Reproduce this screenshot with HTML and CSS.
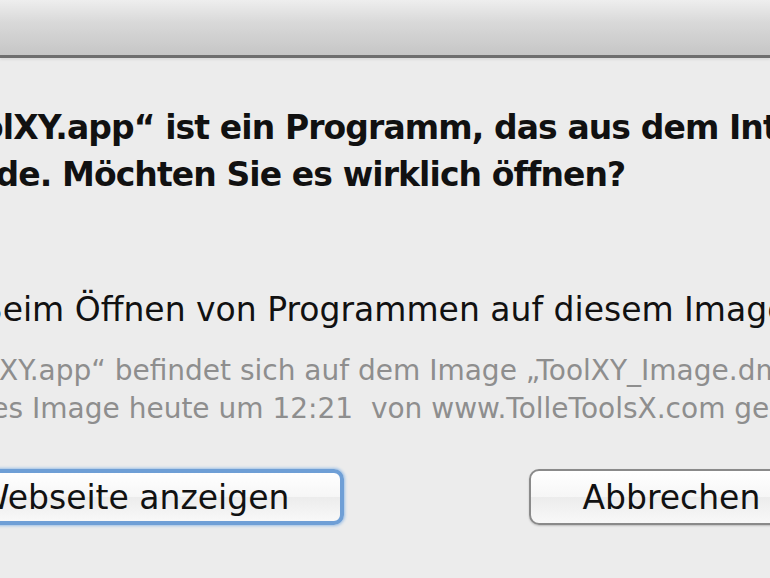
FILE: index.html
```html
<!DOCTYPE html>
<html lang="de">
<head>
    <meta charset="UTF-8">
    <meta name="viewport" content="width=device-width, initial-scale=1.0">
    <title>Programm öffnen</title>
    <link rel="stylesheet" href="styles.css">
</head>
<body>
    <div class="titlebar"></div>

    <div class="dialog">
        <div class="content">
            <p class="message">„ToolXY.app“ ist ein Programm, das aus dem Internet geladen<br>
            wurde. Möchten Sie es wirklich öffnen?</p>

            <label class="option">
                <span class="checkbox"></span>
                <span class="option-text">Beim Öffnen von Programmen auf diesem Image nicht mehr nachfragen</span>
            </label>

            <p class="info">„ToolXY.app“ befindet sich auf dem Image „ToolXY_Image.dmg“. Safari hat<br>
            dieses Image heute um 12:21&nbsp; von www.TolleToolsX.com geladen.</p>
        </div>

        <div class="buttons">
            <button class="btn btn-default">Webseite anzeigen</button>
            <button class="btn">Abbrechen</button>
        </div>
    </div>
</body>
</html>
```

FILE: styles.css
```css
html, body {
    margin: 0;
    height: 100%;
    overflow: hidden;
}
body {
    background: #ececec;
    font-family: "DejaVu Sans", "Noto Sans", sans-serif;
    color: #111;
}
.titlebar {
    height: 55px;
    background: linear-gradient(#eeeeee, #d9d9d9 40%, #c6c6c6);
    border-bottom: 3px solid #6e6e6e;
    box-shadow: 0 2px 2px #dcdcdc;
}
.dialog {
    margin-left: -72px;
    white-space: nowrap;
}
.content {
    padding-top: 46px;
}
.message {
    margin: 0;
    font-size: 33px;
    font-weight: bold;
    line-height: 47px;
    letter-spacing: -0.9px;
}
.option {
    display: flex;
    align-items: center;
    gap: 18px;
    margin-top: 92px;
    font-size: 33px;
    line-height: 40px;
}
.checkbox {
    width: 30px;
    height: 30px;
    border: 2px solid #888;
    border-radius: 4px;
    background: #fff;
    flex: none;
}
.info {
    margin: 22px 0 0 6px;
    font-size: 28px;
    line-height: 38px;
    color: #8e8e8e;
}
.buttons {
    display: flex;
    gap: 185px;
    margin-top: 41px;
    margin-left: -6px;
}
.btn {
    height: 56px;
    padding: 0 51px;
    font-family: inherit;
    font-size: 33px;
    color: #111;
    border: 2px solid #8a8a8a;
    border-radius: 10px;
    background: linear-gradient(#ffffff, #f6f6f6 50%, #ececec 51%, #f8f8f8);
    box-shadow: 0 1px 2px rgba(0, 0, 0, 0.2);
}
.btn-default {
    border: 4px solid #6f9fd6;
    box-shadow: 0 0 3px 1px #9dc0e6;
}
```
